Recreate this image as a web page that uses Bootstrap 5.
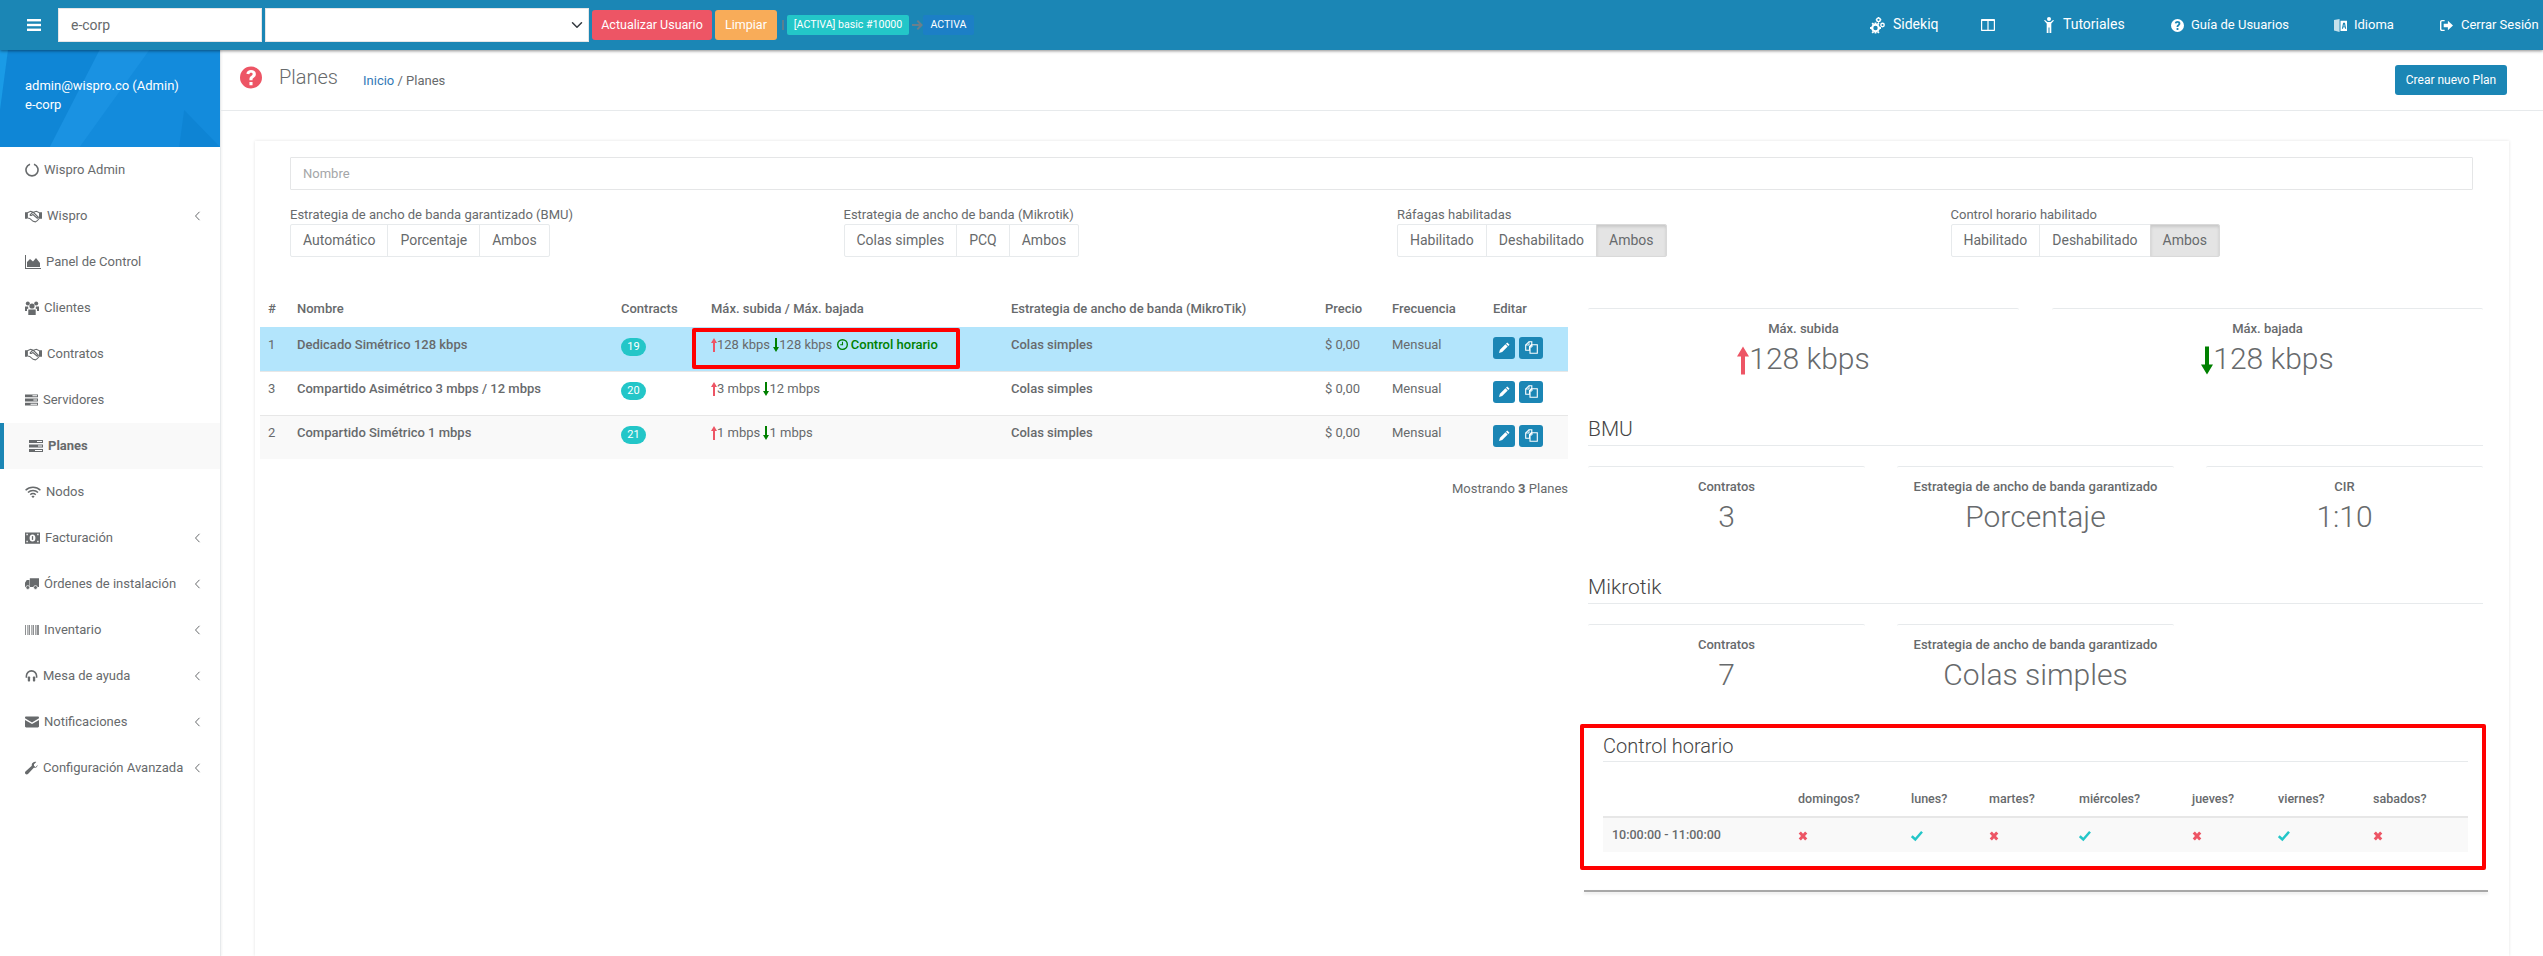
<!DOCTYPE html>
<html lang="es">
<head>
    <meta charset="UTF-8">
    <meta name="viewport" content="width=device-width, initial-scale=1.0">
    <title>Planes</title>
    <link href="https://cdn.jsdelivr.net/npm/bootstrap@5.3.0/dist/css/bootstrap.min.css" rel="stylesheet">
    <style>
        html, body { height: 100%; }
        body { font-family: Roboto, "Liberation Sans", sans-serif; font-size: 13px; color: #676a6c; background: #fff; overflow: hidden; line-height: 1.42857; }
        a { text-decoration: none; }
        .ico { width: 1em; height: 1em; fill: currentColor; flex: none; }

        /* top bar */
        .topbar { height: 50px; background: #1b86b5; box-shadow: 0 1px 3px rgba(0,0,0,.45); position: relative; z-index: 5; padding: 0; flex-wrap: nowrap; }
        .burger { color: #fff; font-size: 14px; margin-left: 27px; width: 31px; }
        .top-input { width: 204px; height: 34px; border-radius: 0; border: 1px solid #e5e6e7; font-size: 14px; color: #676a6c; padding: 6px 12px; }
        .top-select { width: 324px; height: 34px; border-radius: 0; border: 1px solid #e5e6e7; margin-left: 3px; margin-right: 3px; padding: 0; background-position: right 3px center; }
        .top-btn { height: 30px; font-size: 12.5px; border: 0; border-radius: 3px; color: #fff; padding: 0; white-space: nowrap; }
        .btn-rojo { background: #ed5565; width: 120px; }
        .btn-naranja { background: #f8ac59; width: 62px; margin-left: 3px; }
        .tag-sep { width: 2px; height: 10px; background: #5b7f90; margin-left: 5px; }
        .plan-tag { background: #23c6c8; color: #fff; font-size: 10.6px; font-weight: 400; height: 20px; line-height: 20px; padding: 0; border-radius: 2px; margin-left: 3px; width: 122px; text-align: center; }
        .tag-arrow { width: 11px; height: 10px; fill: #6b7f8c; margin-left: 3px; flex: none; }
        .tag-activa { background: #1c7fc6; color: #fff; font-size: 10.6px; font-weight: 400; height: 20px; line-height: 20px; width: 51px; padding: 0; border-radius: 2px; margin-left: 0; text-align: center; }
        .top-links { margin-left: auto; color: #fff; height: 50px; }
        .top-links a { color: #fff; display: flex; align-items: center; position: absolute; top: 0; height: 50px; }

        /* sidebar */
        .shell { height: calc(100% - 50px); }
        .side { width: 221px; flex: none; border-right: 1px solid #e7eaec; box-shadow: 1px 0 2px rgba(0,0,0,.05); background: #fff; }
        .side-head { height: 97px; background: #138bdc; color: #fff; position: relative; padding: 27px 25px 0; font-size: 13px; line-height: 18.5px; overflow: hidden; }
        .side-head svg { position: absolute; inset: 0; width: 100%; height: 100%; }
        .side-head span { position: relative; display: block; }
        .side-item { height: 46px; display: flex; align-items: center; padding: 0 25px; color: #676a6c; font-size: 13px; position: relative; gap: 5px; }
        .side-item .ico { height: 14px; }
        .side-item .caret-l { position: absolute; left: 194px; top: 18px; width: 7px; height: 10px; margin: 0; }
        .side-item.active-item { background: #f9f9f9; border-left: 4px solid #1b86b5; font-weight: 700; }

        /* head of the page */
        .page-head { height: 61px; border-bottom: 1px solid #e7eaec; padding: 0 36px 0 19px; }
        .page-head .q-ico { width: 22px; height: 23px; fill: #ed5565; margin-top: -6px; flex: none; }
        .page-head h2 { font-size: 20px; font-weight: 300; margin: 0 0 0 17px; position: relative; top: -3px; color: #676a6c; }
        .crumb-line { margin-left: 25px; font-size: 13px; top: 1px; position: relative; }
        .crumb-line a { color: #337ab7; }
        .btn-crear { background: #1b86b5; color: #fff; font-size: 12px; width: 112px; height: 30px; padding: 0; border-radius: 3px; border: 0; margin-left: auto; margin-top: -1px; }

        /* main panel */
        .panel-box { margin: 30px 34px 0; height: 815px; box-shadow: 0 0 3px rgba(0,0,0,.12); padding-top: 16px; }
        .name-input { margin-left: 35px; width: 2183px; height: 33px; border: 1px solid #e5e6e7; border-radius: 1px; font-size: 13px; padding: 6px 12px; }
        .name-input::placeholder { color: #a4a6a8; }
        .filter-row { margin: 15px 0 0 35px; width: 2214px; }
        .filter-row > div { padding: 0; }
        .filter-row label { display: block; font-size: 13px; height: 19px; margin: 0; line-height: 19px; }
        .filter-row .btn { font-size: 14px; color: #676a6c; background: #fff; border: 1px solid #e7eaec; height: 33px; padding: 0 12px; border-radius: 2px; box-shadow: none; }
        .filter-row .btn.on { background: #e4e4e4; box-shadow: inset 0 2px 3px rgba(0,0,0,.12); border-color: #d9d9d9; }

        .body-split { padding: 0 0 0 5px; margin-top: 51px; gap: 20px; position: relative; }
        .col-plans { width: 1308px; flex: none; margin-top: -17px; position: relative; }
        .plans { table-layout: fixed; width: 1308px; margin: 0; font-size: 13px; color: #676a6c; }
        .plans th { font-weight: 500; border: 0; padding: 9px 8px 7px; height: 36px; color: #676a6c; vertical-align: middle; background: transparent; }
        .plans td { padding: 8px; height: 44px; border-top: 1px solid #e7e7e7; border-bottom: 0; vertical-align: top; box-shadow: none; background: transparent; color: #676a6c; }
        .plans td.fuerte { font-weight: 500; }
        .plans tr.sel td { background: #b3e5fc; border-top-color: #b3e5fc; }
        .plans tr.alt td { background: #f9f9f9; }
        .num-pill { background: #23c6c8; color: #fff; font-size: 11px; font-weight: 400; width: 25px; height: 18px; line-height: 18px; padding: 0; border-radius: 9px; display: inline-block; margin-top: 2px; vertical-align: top; }
        .up-a { color: #ed5565; }
        .down-a { color: #008000; }
        .mini-arrow { width: 6px; height: 14px; vertical-align: -3px; fill: currentColor; }
        .horario-ok { color: #008000; font-weight: 500; margin-left: 1px; }
        .act-btn { background: #1b86b5; color: #fff; border: 0; border-radius: 3px; height: 22px; padding: 0; width: 22px; display: inline-flex; align-items: center; justify-content: center; margin-top: 1px; vertical-align: top; }
        .act-btn + .act-btn { width: 24px; margin-left: 4px; }
        .act-btn .ico { font-size: 11px; }
        .act-btn .copy-ico { font-size: 13px; fill: none; stroke: currentColor; }
        .plans-count { text-align: right; margin-top: 21px; }
        .plans-count b { font-weight: 700; }

        .col-detail { width: 895px; flex: none; }
        .stat-grid { display: flex; }
        .stat-grid.two { gap: 33px; }
        .stat-grid.three { gap: 32px; }
        .stat-grid > div { flex: 1 1 0; border-top: 1px solid #e7eaec; border-radius: 2px; text-align: center; padding-top: 11px; height: 90px; }
        .stat-grid.three > div { flex: none; width: 277px; }
        .stat-lab { font-size: 13px; font-weight: 500; height: 18px; line-height: 18px; }
        .stat-val { font-size: 30px; font-weight: 300; line-height: 42px; white-space: nowrap; }
        .big-arrow { width: 12px; height: 29px; vertical-align: -6px; fill: currentColor; }
        .sec-title { font-size: 21px; font-weight: 300; color: #444; margin: 0; border-bottom: 1px solid #e7eaec; padding-bottom: 1px; line-height: 30px; }
        .sec-bmu { margin-top: 16px; }
        .sec-mik { margin-top: 16px; }
        .sec-gap { margin-top: 20px; }
        .horario-box { border: 4px solid #f00; border-radius: 2px; margin: 10px -3px 0 -8px; padding: 0 14px 0 19px; height: 146px; position: relative; width: 906px; }
        .horario-box .sec-title { margin-top: 3px; padding-bottom: 0; font-size: 20px; width: 865px; }
        .dias { table-layout: fixed; width: 865px; margin: 19px 0 0; font-size: 12.5px; color: #676a6c; }
        .dias th { font-weight: 500; border-bottom: 2px solid #e7e7e7; height: 36px; padding: 8px 0; vertical-align: middle; color: #676a6c; background: transparent; }
        .dias td { padding: 8px 0; height: 35px; border: 0; vertical-align: middle; background: #f9f9f9; color: #676a6c; box-shadow: none; }
        .dias td:first-child { padding-left: 9px; font-weight: 500; }
        .sym-x { color: #ed5565; font-size: 10px; }
        .sym-ok { color: #23c6c8; font-size: 12px; }
        .foot-rule { margin: 20px -5px 0 -4px; border: 0; border-top: 2px solid #a8a8a8; opacity: 1; box-shadow: 0 2px 3px rgba(0,0,0,.1); }

        .mark-box { position: absolute; left: 432px; top: 37px; width: 268px; height: 41px; border: 4px solid #f00; border-radius: 2px; pointer-events: none; }
    </style>
</head>
<body>
    <svg width="0" height="0" class="position-absolute">
        <defs>
            <symbol id="i-bars" viewBox="0 0 14 12"><rect y="0" width="14" height="2.4"/><rect y="4.8" width="14" height="2.4"/><rect y="9.6" width="14" height="2.4"/></symbol>
            <symbol id="i-notch" viewBox="0 0 14 14"><path d="M5 1.2A6 6 0 1 0 9 1.2" fill="none" stroke="currentColor" stroke-width="1.6"/></symbol>
            <symbol id="i-hands" viewBox="0 0 18 14"><path d="M0 3h2.2v7H0zM15.8 3H18v7h-2.200z"/><path d="M2.500 3.600 6 2l3 1 3-1 3.400 1.600v5.600L13 12l-2 1.200-2.400-.6-3.600-3-2.500-.6zM7.500 3.400 5.400 6c.8.8 1.800.6 3-.6l4.600 4 1.200-1-4.800-4.800z" fill="none" stroke="currentColor" stroke-width="1.1"/></symbol>
            <symbol id="i-chart" viewBox="0 0 16 14"><path d="M0 0h1v13h15v1H0z"/><path d="M2 12V7l3-3 3 2.500L11 3l4 5v4z"/></symbol>
            <symbol id="i-users" viewBox="0 0 14 14"><circle cx="7" cy="5" r="2.600"/><circle cx="2.800" cy="2.500" r="2"/><circle cx="11.200" cy="2.500" r="2"/><path d="M3.300 8.500h7.400v5.500H3.300zM0 5.500h3l.4 2-1.400.6v2H0zM14 5.500h-3l-.4 2 1.400.6v2h2z"/></symbol>
            <symbol id="i-server" viewBox="0 0 14 12"><path d="M0 0h14v3H0zM0 4.500h14v3H0zM0 9h14v3H0z"/><path d="M8 1h5v1H8zM9 5.500h4v1H9zM6 10h7v1H6z" fill="#fff"/></symbol>
            <symbol id="i-wifi" viewBox="0 0 16 12"><path d="M.6 4.200A10.500 10.500 0 0 1 15.400 4.200M3 6.500a7 7 0 0 1 10 0M5.300 8.800a3.600 3.600 0 0 1 5.400 0" fill="none" stroke="currentColor" stroke-width="1.500"/><path d="M8 9.500l1.600 1-1.600 1.500-1.600-1.500z"/></symbol>
            <symbol id="i-money" viewBox="0 0 16 12"><path fill-rule="evenodd" d="M0 0h16v12H0zM1.500 1.500v1.500h1.500V1.500zM13 1.500v1.500h1.500V1.500zM1.500 9v1.500H3V9zM13 9v1.500h1.500V9zM8 2.200A3.100 3.800 0 1 0 8 9.800 3.100 3.800 0 1 0 8 2.200z"/><path d="M7.300 4h1.400v4H7.300z"/></symbol>
            <symbol id="i-truck" viewBox="0 0 16 13"><path d="M5.500 0H16v10H5.500zM0 5l2-3h3v8H0z"/><circle cx="3.200" cy="10.500" r="2.200" stroke="#fff" stroke-width=".8"/><circle cx="12" cy="10.500" r="2.200" stroke="#fff" stroke-width=".8"/></symbol>
            <symbol id="i-barcode" viewBox="0 0 14 10"><path d="M0 0h1v10H0zM2 0h.7v10H2zM3.500 0h1.500v10H3.500zM6 0h.7v10H6zM7.500 0h1.500v10H7.500zM10 0h.8v10H10zM11.500 0H14v10h-2.500z" opacity=".75"/></symbol>
            <symbol id="i-head" viewBox="0 0 14 12"><path d="M1.500 8V6a5.500 5.500 0 0 1 11 0v2" fill="none" stroke="currentColor" stroke-width="1.700"/><rect x="3" y="6.500" width="2.500" height="5.500" rx=".8"/><rect x="8.500" y="6.500" width="2.500" height="5.500" rx=".8"/></symbol>
            <symbol id="i-mail" viewBox="0 0 14 11"><path d="M0 1.200C0 .5.500 0 1.200 0h11.600c.7 0 1.200.5 1.200 1.200v.6L7 6 0 1.800zM0 3.400l7 4.200 7-4.200v6.400c0 .7-.5 1.200-1.200 1.200H1.200C.5 11 0 10.500 0 9.800z"/></symbol>
            <symbol id="i-wrench" viewBox="0 0 14 14"><path d="M13.800 3.200c0 2.300-2 4-4.300 3.600L3.200 13.500c-.8.700-1.900.7-2.600 0-.8-.7-.8-1.800-.1-2.600L7.300 4.500C6.900 2.300 8.600.2 10.900.2c.5 0 .9.100 1.300.3L9.700 3v1.700l1.600 1.600 2.300-2.500c.1-.2.200-.4.200-.6z"/></symbol>
            <symbol id="i-angle" viewBox="0 0 7 10"><path d="M5.500 .8 1.500 5l4 4.200" fill="none" stroke="currentColor" stroke-width="1"/></symbol>
            <symbol id="i-question" viewBox="0 0 20 20"><path fill-rule="evenodd" d="M10 0a10 10 0 1 1 0 20 10 10 0 0 1 0-20zM8.600 14v3h2.800v-3zM10 3.200C7.800 3.200 6.200 4.400 5.800 6.500l2.600.6C8.600 6.200 9.100 5.700 10 5.700c.9 0 1.500.5 1.500 1.200 0 .8-.5 1.200-1.300 1.800-1 .7-1.600 1.500-1.600 2.800v.9h2.800v-.6c0-.7.3-1 1.100-1.600 1.100-.8 1.900-1.700 1.900-3.200 0-2.600-2-3.800-4.400-3.800z"/></symbol>
            <symbol id="i-cogs" viewBox="0 0 16 17">
                <circle cx="5.500" cy="11" r="3.300" fill="none" stroke="currentColor" stroke-width="2.200"/>
                <path d="M4.600 5.500h1.800v2H4.600zM4.600 14.500h1.800v2H4.600zM0 10.100h2v1.800H0zM9 10.100h2v1.800H9zM1.500 6.800l1.300-1.300 1.300 1.300-1.300 1.300zM7 6.800l1.300-1.300 1.300 1.300-1.300 1.300zM1.500 15.200l1.300-1.300 1.300 1.300-1.300 1.300zM7 15.200l1.300-1.300 1.300 1.300-1.300 1.300z"/>
                <circle cx="12.500" cy="8" r="1.700" fill="none" stroke="currentColor" stroke-width="1.400"/>
                <circle cx="8.500" cy="2.800" r="1.800" fill="none" stroke="currentColor" stroke-width="1.400"/>
                <path d="M8 0h1v1H8zM8 4.700h1v1H8zM5.700 2.300h1v1h-1zM10.400 2.300h1v1h-1z"/>
            </symbol>
            <symbol id="i-cols" viewBox="0 0 14 12"><path fill-rule="evenodd" d="M1 0h12c.6 0 1 .4 1 1v10c0 .6-.4 1-1 1H1c-.6 0-1-.4-1-1V1c0-.6.4-1 1-1zM1.200 2v8.800h5.200V2zM7.600 2v8.800h5.200V2z"/></symbol>
            <symbol id="i-male" viewBox="0 0 10 16"><circle cx="5" cy="2" r="2"/><path d="M0 3.500l1-.6L3.300 5h3.400L9 2.900l1 .6L7.300 6.500V16H5.500v-5.500h-1V16H2.700V6.500z"/></symbol>
            <symbol id="i-lang" viewBox="0 0 14 14"><path d="M0 1l6-1v14l-6-1.500z" opacity=".75"/><path fill-rule="evenodd" d="M7 2h7v11H7zM9.800 4 8.500 10.500h1.200l.3-1.500h1.600l.3 1.500h1.200L11.800 4zM10.800 5.500l.6 2.500h-1.200z"/></symbol>
            <symbol id="i-out" viewBox="0 0 14 12"><path d="M5 0H2C.9 0 0 .9 0 2v8c0 1.100.9 2 2 2h3v-1.500H2.200c-.4 0-.7-.3-.7-.7V2.200c0-.4.3-.7.7-.7H5z"/><path d="M8.500 1 14 6l-5.500 5V8H4V4h4.500z"/></symbol>
            <symbol id="i-pencil" viewBox="0 0 12 12"><path d="M9 .5l2.500 2.500-1.400 1.400-2.500-2.500zM7 2.500 9.500 5 3.500 11 0 12l1-3.500z"/></symbol>
            <symbol id="i-copy" viewBox="0 0 13 13"><path d="M4 .7h2.800v2.500L4.500 5.400v3.800H.7V4z" stroke-width="1.100"/><path d="M7 3.800h5.300v8.500H5V6z" stroke-width="1.100"/><path d="M4 .7v3.300H.7M7 3.800V6H5" stroke-width=".9"/></symbol>
            <symbol id="i-clock" viewBox="0 0 12 12"><path fill-rule="evenodd" d="M6 0a6 6 0 1 1 0 12A6 6 0 0 1 6 0zm0 1.500a4.500 4.500 0 1 0 0 9 4.500 4.500 0 0 0 0-9z"/><path d="M5.400 3h1.200v3.800H3.500V5.700h1.900z"/></symbol>
            <symbol id="i-x" viewBox="0 0 10 10"><path d="M1.800 1.500 8.200 8.500M8.200 1.500 1.800 8.500" fill="none" stroke="currentColor" stroke-width="3"/></symbol>
            <symbol id="i-check" viewBox="0 0 12 10"><path d="M.8 5.200 4.300 8.500 11 .8" fill="none" stroke="currentColor" stroke-width="2.500"/></symbol>
            <symbol id="i-arrow-up" viewBox="0 0 6 14"><path d="M3 0l3 5H4v9H2V5H0z"/></symbol>
            <symbol id="i-arrow-down" viewBox="0 0 6 14"><path d="M3 14l3-5H4V0H2v9H0z"/></symbol>
            <symbol id="i-arrow-right" viewBox="0 0 11 10"><path d="M6 0l5 5-5 5-1.300-1.300L7 6H0V4h7L4.700 1.300z"/></symbol>
        </defs>
    </svg>

    <nav class="navbar topbar align-items-center justify-content-start">
        <a class="burger d-flex" href="#"><svg class="ico"><use href="#i-bars"/></svg></a>
        <input class="form-control top-input" type="text" value="e-corp">
        <select class="form-select top-select"><option></option></select>
        <button class="btn top-btn btn-rojo" type="button">Actualizar Usuario</button>
        <button class="btn top-btn btn-naranja" type="button">Limpiar</button>
        <span class="tag-sep"></span>
        <span class="badge plan-tag">[ACTIVA] basic #10000</span>
        <svg class="tag-arrow"><use href="#i-arrow-right"/></svg>
        <span class="badge tag-activa">ACTIVA</span>
        <div class="top-links">
            <a href="#" style="left:1870px;font-size:14px"><svg class="ico" style="width:16px;height:17px;margin-right:7px"><use href="#i-cogs"/></svg>Sidekiq</a>
            <a href="#" style="left:1981px;font-size:14px"><svg class="ico"><use href="#i-cols"/></svg></a>
            <a href="#" style="left:2044px;font-size:14px"><svg class="ico" style="width:10px;height:16px;margin-right:9px"><use href="#i-male"/></svg>Tutoriales</a>
            <a href="#" style="left:2171px;font-size:13px"><svg class="ico" style="margin-right:7px"><use href="#i-question"/></svg>Guía de Usuarios</a>
            <a href="#" style="left:2334px;font-size:13px"><svg class="ico" style="margin-right:7px"><use href="#i-lang"/></svg>Idioma</a>
            <a href="#" style="left:2440px;font-size:13px"><svg class="ico" style="margin-right:8px"><use href="#i-out"/></svg>Cerrar Sesión</a>
        </div>
    </nav>

    <div class="d-flex shell">
        <aside class="side">
            <div class="side-head">
                <svg viewBox="0 0 221 97" preserveAspectRatio="none">
                    <polygon points="0,0 140,0 70,97 0,97" fill="#0f86d6"/>
                    <polygon points="100,0 150,0 80,97 50,97" fill="#1a92e2"/>
                    <polygon points="185,60 221,97 180,97" fill="#0e84d4"/>
                    <polygon points="0,0 8,0 0,60" fill="#1a9be6"/>
                </svg>
                <span>admin@wispro.co (Admin)</span>
                <span>e-corp</span>
            </div>
            <nav class="nav flex-column" id="sideMenu"></nav>
        </aside>

        <main class="flex-grow-1">
            <div class="page-head d-flex align-items-center">
                <svg class="q-ico"><use href="#i-question"/></svg>
                <h2>Planes</h2>
                <div class="crumb-line"><a href="#">Inicio</a> / Planes</div>
                <button class="btn btn-crear" type="button">Crear nuevo Plan</button>
            </div>

            <div class="panel-box">
                <input class="form-control name-input" type="text" placeholder="Nombre">
                <div class="row g-0 filter-row">
                    <div class="col-3">
                        <label>Estrategia de ancho de banda garantizado (BMU)</label>
                        <div class="btn-group"><button class="btn">Automático</button><button class="btn">Porcentaje</button><button class="btn">Ambos</button></div>
                    </div>
                    <div class="col-3">
                        <label>Estrategia de ancho de banda (Mikrotik)</label>
                        <div class="btn-group"><button class="btn">Colas simples</button><button class="btn">PCQ</button><button class="btn">Ambos</button></div>
                    </div>
                    <div class="col-3">
                        <label>Ráfagas habilitadas</label>
                        <div class="btn-group"><button class="btn">Habilitado</button><button class="btn">Deshabilitado</button><button class="btn on">Ambos</button></div>
                    </div>
                    <div class="col-3">
                        <label>Control horario habilitado</label>
                        <div class="btn-group"><button class="btn">Habilitado</button><button class="btn">Deshabilitado</button><button class="btn on">Ambos</button></div>
                    </div>
                </div>

                <div class="d-flex body-split">
                    <div class="col-plans">
                        <table class="table plans">
                            <colgroup><col style="width:29px"><col style="width:324px"><col style="width:90px"><col style="width:300px"><col style="width:314px"><col style="width:67px"><col style="width:101px"><col style="width:83px"></colgroup>
                            <thead>
                                <tr><th>#</th><th>Nombre</th><th>Contracts</th><th>Máx. subida / Máx. bajada</th><th>Estrategia de ancho de banda (MikroTik)</th><th>Precio</th><th>Frecuencia</th><th>Editar</th></tr>
                            </thead>
                            <tbody id="plansBody"></tbody>
                        </table>
                        <div class="plans-count">Mostrando <b>3</b> Planes</div>
                        <div class="mark-box" aria-hidden="true"></div>
                    </div>

                    <div class="col-detail">
                        <div class="stat-grid two">
                            <div><div class="stat-lab">Máx. subida</div><div class="stat-val"><svg class="big-arrow up-a"><use href="#i-arrow-up"/></svg>128 kbps</div></div>
                            <div><div class="stat-lab">Máx. bajada</div><div class="stat-val"><svg class="big-arrow down-a"><use href="#i-arrow-down"/></svg>128 kbps</div></div>
                        </div>
                        <h3 class="sec-title sec-bmu">BMU</h3>
                        <div class="stat-grid three sec-gap">
                            <div><div class="stat-lab">Contratos</div><div class="stat-val">3</div></div>
                            <div><div class="stat-lab">Estrategia de ancho de banda garantizado</div><div class="stat-val">Porcentaje</div></div>
                            <div><div class="stat-lab">CIR</div><div class="stat-val">1:10</div></div>
                        </div>
                        <h3 class="sec-title sec-mik">Mikrotik</h3>
                        <div class="stat-grid three sec-gap">
                            <div><div class="stat-lab">Contratos</div><div class="stat-val">7</div></div>
                            <div><div class="stat-lab">Estrategia de ancho de banda garantizado</div><div class="stat-val">Colas simples</div></div>
                        </div>
                        <div class="horario-box">
                            <h3 class="sec-title">Control horario</h3>
                            <table class="table dias">
                                <colgroup><col style="width:195px"><col style="width:113px"><col style="width:78px"><col style="width:90px"><col style="width:113px"><col style="width:86px"><col style="width:95px"><col style="width:95px"></colgroup>
                                <thead><tr><th></th><th>domingos?</th><th>lunes?</th><th>martes?</th><th>miércoles?</th><th>jueves?</th><th>viernes?</th><th>sabados?</th></tr></thead>
                                <tbody><tr id="diasRow"><td>10:00:00 - 11:00:00</td></tr></tbody>
                            </table>
                        </div>
                        <hr class="foot-rule">
                    </div>
                </div>
            </div>
        </main>
    </div>

    <script>
        // sidebar entries: icon, icon width, label, has submenu
        const menu = [
            ['i-notch', 14, 'Wispro Admin', false], ['i-hands', 17, 'Wispro', true], ['i-chart', 16, 'Panel de Control', false],
            ['i-users', 14, 'Clientes', false], ['i-hands', 17, 'Contratos', false], ['i-server', 13, 'Servidores', false],
            ['i-server', 14, 'Planes', false, true], ['i-wifi', 16, 'Nodos', false], ['i-money', 15, 'Facturación', true],
            ['i-truck', 14, 'Órdenes de instalación', true], ['i-barcode', 14, 'Inventario', true], ['i-head', 13, 'Mesa de ayuda', true],
            ['i-mail', 14, 'Notificaciones', true], ['i-wrench', 13, 'Configuración Avanzada', true]
        ];
        document.getElementById('sideMenu').innerHTML = menu.map(([icon, w, label, sub, on]) => `
            <a class="side-item${on ? ' active-item' : ''}" href="#">
                <svg class="ico" style="width:${w}px"><use href="#${icon}"/></svg>${label}
                ${sub ? '<svg class="ico caret-l"><use href="#i-angle"/></svg>' : ''}
            </a>`).join('');

        const plans = [
            { id: 1, name: 'Dedicado Simétrico 128 kbps', n: 19, up: '128 kbps', down: '128 kbps', timed: true, cls: 'sel' },
            { id: 3, name: 'Compartido Asimétrico 3 mbps / 12 mbps', n: 20, up: '3 mbps', down: '12 mbps', cls: '' },
            { id: 2, name: 'Compartido Simétrico 1 mbps', n: 21, up: '1 mbps', down: '1 mbps', cls: 'alt' }
        ];
        document.getElementById('plansBody').innerHTML = plans.map(p => `
            <tr class="${p.cls}">
                <td>${p.id}</td>
                <td class="fuerte">${p.name}</td>
                <td><span class="badge num-pill">${p.n}</span></td>
                <td><svg class="mini-arrow up-a"><use href="#i-arrow-up"/></svg>${p.up} <svg class="mini-arrow down-a"><use href="#i-arrow-down"/></svg>${p.down}${p.timed ? ' <span class="horario-ok"><svg class="ico" style="font-size:11px;vertical-align:-1px"><use href="#i-clock"/></svg> Control horario</span>' : ''}</td>
                <td class="fuerte">Colas simples</td>
                <td>$ 0,00</td>
                <td>Mensual</td>
                <td><button class="act-btn"><svg class="ico"><use href="#i-pencil"/></svg></button><button class="act-btn"><svg class="ico copy-ico"><use href="#i-copy"/></svg></button></td>
            </tr>`).join('');

        const dias = [0, 1, 0, 1, 0, 1, 0];
        document.getElementById('diasRow').insertAdjacentHTML('beforeend', dias.map(d =>
            d ? '<td><svg class="ico sym-ok"><use href="#i-check"/></svg></td>' : '<td><svg class="ico sym-x"><use href="#i-x"/></svg></td>').join(''));
    </script>
    <script src="https://cdn.jsdelivr.net/npm/bootstrap@5.3.0/dist/js/bootstrap.bundle.min.js"></script>
</body>
</html>
